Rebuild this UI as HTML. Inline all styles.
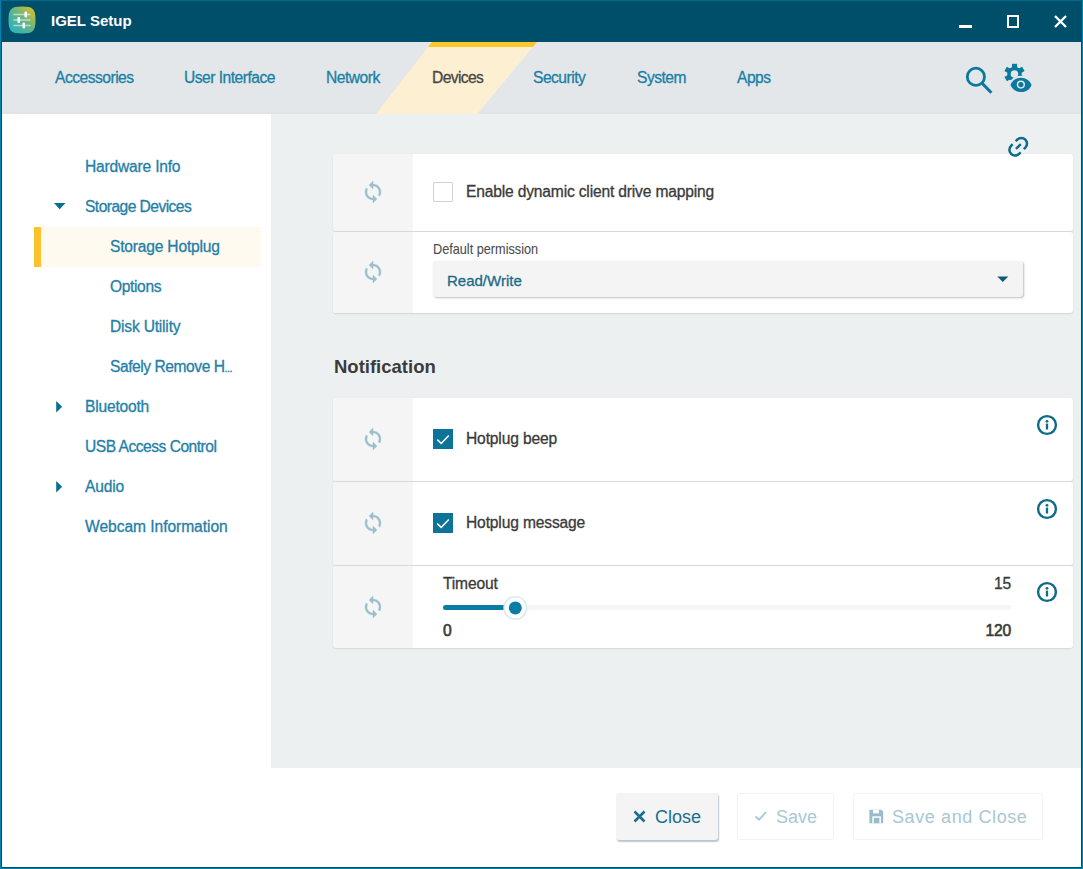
<!DOCTYPE html>
<html><head><meta charset="utf-8">
<style>
*{margin:0;padding:0;box-sizing:border-box}
html,body{width:1083px;height:869px;overflow:hidden;background:#fff}
body{font-family:"Liberation Sans",sans-serif;position:relative}
.a{position:absolute}
.t{position:absolute;white-space:nowrap;line-height:1;-webkit-text-stroke:0.3px currentColor}
#frame{left:0;top:0;width:1083px;height:869px;background:#0086ae}
#inner{left:1px;top:1px;width:1081px;height:867px;background:#004f6a}
#title{left:2px;top:1px;width:1079px;height:41px;background:#004f6a}
#nav{left:2px;top:42px;width:1079px;height:72px;background:#e3e7ea}
#side{left:2px;top:114px;width:269px;height:654px;background:#fff}
#content{left:271px;top:114px;width:810px;height:654px;background:#ecf0f1}
#footer{left:2px;top:768px;width:1079px;height:99px;background:#fff}
.tab{font-size:15.6px;letter-spacing:-0.5px;color:#1b7fa6;top:69.8px}
.si{font-size:15.6px;letter-spacing:-0.2px;color:#1f80a8}
.card{position:absolute;left:333px;width:740px;background:#fff;border-radius:3px;box-shadow:0 1px 1.5px rgba(50,90,100,0.15),0 0 1px rgba(50,90,100,0.07);overflow:hidden}
.sync{position:absolute;left:0;top:0;bottom:0;width:80px;background:#f5f5f5}
.lbl{font-size:15.6px;letter-spacing:-0.15px;color:#3a3a3a}
</style></head><body>
<div id="frame" class="a"></div><div class="a" style="left:0;top:0;width:1083px;height:1px;background:#006b90"></div>
<div id="inner" class="a"></div>
<div id="title" class="a"></div>
<div id="nav" class="a"></div>
<div class="a" style="left:2px;top:112px;width:1079px;height:2px;background:#e0e4e7"></div><div id="side" class="a"></div>
<div id="content" class="a"></div>
<div id="footer" class="a"></div>

<!-- title bar -->
<svg class="a" style="left:7px;top:5px" width="30" height="30" viewBox="0 0 30 30">
<defs><linearGradient id="ig" x1="0" y1="1" x2="1" y2="0"><stop offset="0" stop-color="#1fb3c8"/><stop offset="0.5" stop-color="#5fb48a"/><stop offset="1" stop-color="#e8c21a"/></linearGradient></defs>
<path d="M15 1.5C26 1.5 28.5 4 28.5 15S26 28.5 15 28.5 1.5 26 1.5 15 4 1.5 15 1.5Z" fill="url(#ig)"/>
<g stroke="#ffffff" stroke-width="1.5" stroke-linecap="round" opacity="0.55"><line x1="7" y1="9.5" x2="23" y2="9.5"/><line x1="7" y1="15" x2="23" y2="15"/><line x1="7" y1="20.5" x2="23" y2="20.5"/></g>
<g fill="#fff"><rect x="17.5" y="6.5" width="2.6" height="6" rx="1"/><rect x="10.5" y="12" width="2.6" height="6" rx="1"/><rect x="15.5" y="17.5" width="2.6" height="6" rx="1"/></g>
</svg>
<div class="t" style="left:51px;top:12.5px;font-size:15px;font-weight:bold;-webkit-text-stroke:0;color:#fff">IGEL Setup</div>
<div class="a" style="left:959px;top:25px;width:13px;height:3px;background:#fff"></div>
<div class="a" style="left:1007px;top:15px;width:12px;height:13px;border:2.5px solid #fff"></div>
<svg class="a" style="left:1053px;top:14px" width="15" height="15" viewBox="0 0 15 15"><path d="M2 2L13 13M13 2L2 13" stroke="#fff" stroke-width="2.4"/></svg>

<!-- nav -->
<svg class="a" style="left:376px;top:42px" width="162" height="72"><polygon points="56,0 161,0 101,72 0,72" fill="#fdf0d2"/><polygon points="56,0 161,0 157,5 52,5" fill="#fcc62d"/></svg>
<div class="t tab" style="left:55px">Accessories</div>
<div class="t tab" style="left:184px">User Interface</div>
<div class="t tab" style="left:326px">Network</div>
<div class="t tab" style="left:432px;color:#474747;letter-spacing:-0.6px">Devices</div>
<div class="t tab" style="left:533px">Security</div>
<div class="t tab" style="left:637px">System</div>
<div class="t tab" style="left:737px">Apps</div>
<svg class="a" style="left:962px;top:63px" width="34" height="34" viewBox="0 0 34 34"><circle cx="13.9" cy="13.8" r="8.6" fill="none" stroke="#0b789e" stroke-width="2.8"/><path d="M20.2 20.4L29.4 29.8" stroke="#0b789e" stroke-width="3"/></svg>
<svg class="a" style="left:0;top:0" width="1083" height="110" viewBox="0 0 1083 110">
<g transform="translate(1014.5 74)" fill="#0b789e"><rect x="-2.5" y="-10.2" width="5" height="5" transform="rotate(0)"/><rect x="-2.5" y="-10.2" width="5" height="5" transform="rotate(60)"/><rect x="-2.5" y="-10.2" width="5" height="5" transform="rotate(120)"/><rect x="-2.5" y="-10.2" width="5" height="5" transform="rotate(180)"/><rect x="-2.5" y="-10.2" width="5" height="5" transform="rotate(240)"/><rect x="-2.5" y="-10.2" width="5" height="5" transform="rotate(300)"/><path fill-rule="evenodd" d="M-7.3 0A7.3 7.3 0 1 0 7.3 0A7.3 7.3 0 1 0 -7.3 0ZM-3.8 0A3.8 3.8 0 1 1 3.8 0A3.8 3.8 0 1 1 -3.8 0Z"/></g>
<g transform="translate(1021 84.9) scale(0.96) translate(-12 -12)"><path d="M12 4.5C7 4.5 2.73 7.61 1 12c1.73 4.39 6 7.5 11 7.5s9.27-3.11 11-7.5c-1.73-4.39-6-7.5-11-7.5z" fill="#0b789e" stroke="#e3e7ea" stroke-width="4" paint-order="stroke"/></g>
<circle cx="1020.9" cy="84.6" r="4.1" fill="#e3e7ea"/><circle cx="1020.9" cy="84.6" r="2.6" fill="#0b789e"/></svg>

<!-- sidebar -->
<div class="a" style="left:34px;top:227px;width:227px;height:40px;background:#fffaf0"></div>
<div class="a" style="left:34px;top:227px;width:7px;height:40px;background:#fbc22b"></div>
<svg class="a" style="left:0;top:0" width="80" height="560" viewBox="0 0 80 560">
<polygon points="54,203 65.5,203 59.7,209.2" fill="#0b6e94"/>
<polygon points="56.2,401 56.2,412.5 62.2,406.7" fill="#0b6e94"/>
<polygon points="56.2,481 56.2,492.5 62.2,486.7" fill="#0b6e94"/>
</svg>
<div class="t si" style="left:85px;top:158.5px">Hardware Info</div>
<div class="t si" style="left:85px;top:198.5px;letter-spacing:-0.55px">Storage Devices</div>
<div class="t si" style="left:110px;top:238.5px">Storage Hotplug</div>
<div class="t si" style="left:110px;top:278.5px;letter-spacing:-0.37px">Options</div>
<div class="t si" style="left:110px;top:318.5px">Disk Utility</div>
<div class="t si" style="left:110px;top:358.5px;letter-spacing:-0.45px">Safely Remove H<span style="letter-spacing:-0.6px;font-size:11px">...</span></div>
<div class="t si" style="left:85px;top:398.5px">Bluetooth</div>
<div class="t si" style="left:85px;top:438.5px;letter-spacing:-0.5px">USB Access Control</div>
<div class="t si" style="left:85px;top:478.5px">Audio</div>
<div class="t si" style="left:85px;top:518.5px;letter-spacing:-0.05px">Webcam Information</div>

<!-- content -->

<div class="card" style="top:154px;height:77px"><div class="sync"></div></div>
<div class="card" style="top:232px;height:81px"><div class="sync"></div></div>
<svg class="a" style="left:0;top:0" width="1083" height="200" viewBox="0 0 1083 200"><g transform="translate(1018.2 146.7) rotate(-45)" fill="none" stroke="#0e6a89" stroke-width="2.5"><path d="M2.2 -5.7H4.4A5.7 5.7 0 0 1 4.4 5.7H2.2"/><path d="M-2.2 5.7H-4.4A5.7 5.7 0 0 1 -4.4 -5.7H-2.2"/><path d="M-3.2 0H3.6"/></g></svg>
<div class="t" style="left:334px;top:357.5px;font-size:18.5px;font-weight:bold;-webkit-text-stroke:0;color:#3b3b3b">Notification</div>
<div class="card" style="top:398px;height:83px"><div class="sync"></div></div>
<div class="card" style="top:482px;height:83px"><div class="sync"></div></div>
<div class="card" style="top:566px;height:82px"><div class="sync"></div></div>
<svg class="a" style="left:361px;top:179.5px" width="24" height="24" viewBox="0 0 24 24"><path fill="#9bbfcc" stroke="#9bbfcc" stroke-width="0.35" d="M12 4V1L8 5l4 4V6c3.31 0 6 2.69 6 6 0 1.01-.25 1.97-.7 2.8l1.46 1.46C19.54 15.03 20 13.57 20 12c0-4.42-3.58-8-8-8zm0 14c-3.31 0-6-2.69-6-6 0-1.01.25-1.97.7-2.8L5.24 7.74C4.46 8.97 4 10.43 4 12c0 4.42 3.58 8 8 8v3l4-4-4-4v3z"/></svg><svg class="a" style="left:361px;top:259.5px" width="24" height="24" viewBox="0 0 24 24"><path fill="#9bbfcc" stroke="#9bbfcc" stroke-width="0.35" d="M12 4V1L8 5l4 4V6c3.31 0 6 2.69 6 6 0 1.01-.25 1.97-.7 2.8l1.46 1.46C19.54 15.03 20 13.57 20 12c0-4.42-3.58-8-8-8zm0 14c-3.31 0-6-2.69-6-6 0-1.01.25-1.97.7-2.8L5.24 7.74C4.46 8.97 4 10.43 4 12c0 4.42 3.58 8 8 8v3l4-4-4-4v3z"/></svg><svg class="a" style="left:361px;top:427px" width="24" height="24" viewBox="0 0 24 24"><path fill="#9bbfcc" stroke="#9bbfcc" stroke-width="0.35" d="M12 4V1L8 5l4 4V6c3.31 0 6 2.69 6 6 0 1.01-.25 1.97-.7 2.8l1.46 1.46C19.54 15.03 20 13.57 20 12c0-4.42-3.58-8-8-8zm0 14c-3.31 0-6-2.69-6-6 0-1.01.25-1.97.7-2.8L5.24 7.74C4.46 8.97 4 10.43 4 12c0 4.42 3.58 8 8 8v3l4-4-4-4v3z"/></svg><svg class="a" style="left:361px;top:511px" width="24" height="24" viewBox="0 0 24 24"><path fill="#9bbfcc" stroke="#9bbfcc" stroke-width="0.35" d="M12 4V1L8 5l4 4V6c3.31 0 6 2.69 6 6 0 1.01-.25 1.97-.7 2.8l1.46 1.46C19.54 15.03 20 13.57 20 12c0-4.42-3.58-8-8-8zm0 14c-3.31 0-6-2.69-6-6 0-1.01.25-1.97.7-2.8L5.24 7.74C4.46 8.97 4 10.43 4 12c0 4.42 3.58 8 8 8v3l4-4-4-4v3z"/></svg><svg class="a" style="left:361px;top:595px" width="24" height="24" viewBox="0 0 24 24"><path fill="#9bbfcc" stroke="#9bbfcc" stroke-width="0.35" d="M12 4V1L8 5l4 4V6c3.31 0 6 2.69 6 6 0 1.01-.25 1.97-.7 2.8l1.46 1.46C19.54 15.03 20 13.57 20 12c0-4.42-3.58-8-8-8zm0 14c-3.31 0-6-2.69-6-6 0-1.01.25-1.97.7-2.8L5.24 7.74C4.46 8.97 4 10.43 4 12c0 4.42 3.58 8 8 8v3l4-4-4-4v3z"/></svg>
<div class="a" style="left:433px;top:182px;width:20px;height:20px;border:1.5px solid #d2d2d2;border-radius:1px;background:#fff"></div>
<div class="t lbl" style="left:466px;top:183.8px;letter-spacing:-0.17px">Enable dynamic client drive mapping</div>
<div class="t" style="left:433px;top:241.5px;font-size:14.5px;color:#4d4d4d;-webkit-text-stroke:0.1px currentColor;transform:scaleX(0.875);transform-origin:0 0">Default permission</div>
<div class="a" style="left:433px;top:261px;width:590px;height:36px;background:#f4f4f4;border-radius:3px;box-shadow:1px 1px 2px rgba(20,50,60,0.3)"></div>
<div class="t" style="left:447px;top:272.5px;font-size:15px;color:#1b6b88">Read/Write</div>
<svg class="a" style="left:996px;top:276px" width="14" height="8"><polygon points="1.3,0.5 12.3,0.5 6.8,6" fill="#0b5a78"/></svg>
<div class="a" style="left:433px;top:429px;width:20px;height:20px;background:#0d7399"></div><svg class="a" style="left:433px;top:429px" width="20" height="20" viewBox="0 0 20 20"><path d="M4.3 10.6l3.9 3.8 7.6-7.8" fill="none" stroke="#fff" stroke-width="1.5"/></svg><div class="a" style="left:433px;top:513px;width:20px;height:20px;background:#0d7399"></div><svg class="a" style="left:433px;top:513px" width="20" height="20" viewBox="0 0 20 20"><path d="M4.3 10.6l3.9 3.8 7.6-7.8" fill="none" stroke="#fff" stroke-width="1.5"/></svg>
<div class="t lbl" style="left:466px;top:431px">Hotplug beep</div>
<div class="t lbl" style="left:466px;top:515px">Hotplug message</div>
<svg class="a" style="left:1035px;top:413.4px" width="24" height="24" viewBox="0 0 24 24"><circle cx="12" cy="12" r="8.9" fill="none" stroke="#0e6a89" stroke-width="2.4"/><circle cx="12" cy="8.3" r="1.4" fill="#0e6a89"/><rect x="10.85" y="10.6" width="2.3" height="5.9" fill="#0e6a89"/></svg><svg class="a" style="left:1035px;top:497.2px" width="24" height="24" viewBox="0 0 24 24"><circle cx="12" cy="12" r="8.9" fill="none" stroke="#0e6a89" stroke-width="2.4"/><circle cx="12" cy="8.3" r="1.4" fill="#0e6a89"/><rect x="10.85" y="10.6" width="2.3" height="5.9" fill="#0e6a89"/></svg><svg class="a" style="left:1035px;top:580.3px" width="24" height="24" viewBox="0 0 24 24"><circle cx="12" cy="12" r="8.9" fill="none" stroke="#0e6a89" stroke-width="2.4"/><circle cx="12" cy="8.3" r="1.4" fill="#0e6a89"/><rect x="10.85" y="10.6" width="2.3" height="5.9" fill="#0e6a89"/></svg>
<div class="t lbl" style="left:443px;top:575.8px">Timeout</div>
<div class="t lbl" style="left:994px;top:575.5px">15</div>
<div class="t lbl" style="left:443px;top:623.2px;-webkit-text-stroke:0.6px currentColor">0</div>
<div class="t lbl" style="left:985.5px;top:623.2px;-webkit-text-stroke:0.6px currentColor">120</div>
<div class="a" style="left:515px;top:605px;width:496px;height:5px;background:#f6f6f6"></div>
<div class="a" style="left:443px;top:605px;width:74px;height:5px;background:#0b7ca4;border-radius:2.5px"></div>
<svg class="a" style="left:500px;top:593px" width="31" height="31" viewBox="0 0 31 31"><circle cx="15.3" cy="14.9" r="11.3" fill="#fff" stroke="#d3e9f0" stroke-width="1.4"/><circle cx="15.3" cy="14.9" r="6.5" fill="#0b7ca4"/></svg>

<!-- footer buttons -->
<div class="a" style="left:616px;top:793px;width:102px;height:47px;background:#f4f4f4;border-radius:3px;box-shadow:1px 1.5px 1.5px rgba(0,50,70,0.28)"></div>
<div class="a" style="left:737px;top:793px;width:97px;height:47px;background:#fff;border:1px solid #f0f3f4;border-radius:3px"></div>
<div class="a" style="left:853px;top:793px;width:190px;height:47px;background:#fff;border:1px solid #f0f3f4;border-radius:3px"></div>
<div class="t" style="left:655px;top:808px;font-size:18px;color:#1a6e8e;-webkit-text-stroke:0">Close</div>
<div class="t" style="left:776px;top:808px;font-size:18px;color:#a8c8d4;-webkit-text-stroke:0">Save</div>
<div class="t" style="left:892px;top:808px;font-size:18px;color:#a8c8d4;letter-spacing:0.6px;-webkit-text-stroke:0">Save and Close</div>
<svg class="a" style="left:632px;top:810px" width="15" height="14" viewBox="0 0 15 14"><path d="M2.5 1.5L12.5 11.5M12.5 1.5L2.5 11.5" stroke="#1a6e8e" stroke-width="2.6"/></svg>
<svg class="a" style="left:753px;top:808px" width="16" height="16" viewBox="0 0 16 16"><path d="M2.5 8.5l3.5 3.2 7-7.5" fill="none" stroke="#a8c8d4" stroke-width="1.8"/></svg>
<svg class="a" style="left:0;top:780px" width="1083" height="60" viewBox="0 780 1083 60"><path fill="#98bcc9" d="M869.4 809.8H881.5L883.2 811.5V823.2H869.4Z"/><rect x="873" y="809.8" width="6" height="3.6" fill="#fff"/><rect x="872.3" y="816.3" width="8.6" height="6.9" fill="#fff"/><rect x="873.8" y="817.8" width="5.6" height="5.4" fill="#98bcc9"/></svg>
</body></html>
